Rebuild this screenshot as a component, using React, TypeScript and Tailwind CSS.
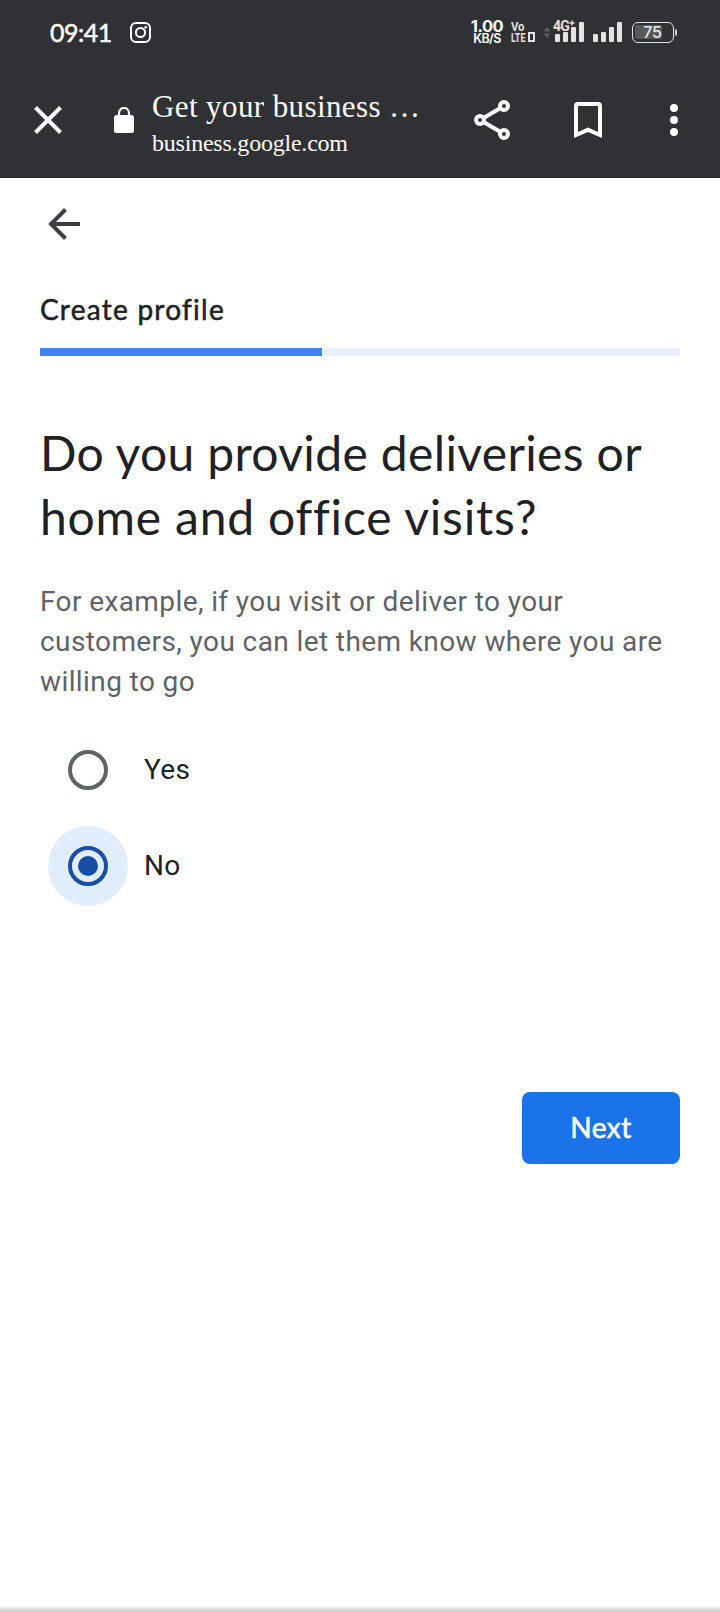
import React from 'react';

function SignalBars({ heights }: { heights: number[] }) {
  return (
    <svg width="29" height="20" viewBox="0 0 29 20" fill="#e2e2e2">
      {heights.map((h, i) => (
        <rect key={i} x={i * 8} y={20 - h} width="5" height={h} rx="1" />
      ))}
    </svg>
  );
}

function StatusBar() {
  return (
    <div className="flex h-16 items-center pl-[50px] font-[Inter,sans-serif] text-white">
      <span className="w-[62px] whitespace-nowrap font-[Lato,sans-serif] text-[25px] leading-8 tracking-[-0.5px] [-webkit-text-stroke:0.5px_white]">09:41</span>
      <svg className="ml-[18px]" width="21" height="21" viewBox="0 0 21 21" fill="none" stroke="#fff" strokeWidth="2">
        <rect x="1" y="1" width="19" height="19" rx="5" />
        <circle cx="10.5" cy="10.5" r="4.6" />
        <circle cx="15.7" cy="5.3" r="1.3" fill="#fff" stroke="none" />
      </svg>
      <div className="ml-[320px] flex w-8 flex-col items-center pt-px">
        <span className="text-[16.5px] font-bold leading-[13px] tracking-[-0.5px]">1.00</span>
        <span className="text-[12.5px] font-semibold leading-[12px] tracking-[-0.6px]">KB/S</span>
      </div>
      <div className="ml-[8px] flex w-6 flex-col font-[Roboto,sans-serif] text-[#e2e2e2]">
        <span className="origin-left scale-x-90 text-[12.5px] font-bold leading-[10px]">Vo</span>
        <span className="flex items-center text-[12.5px] font-bold leading-[11px]">
          <span className="w-[17px] origin-left scale-x-[0.72]">LTE</span>
          <svg width="7" height="10" viewBox="0 0 7 10" fill="none" stroke="#e2e2e2" strokeWidth="2">
            <rect x="1" y="1" width="5" height="8" />
          </svg>
        </span>
      </div>
      <svg className="ml-[8px]" width="8" height="20" viewBox="0 0 8 20" fill="#5d5d60">
        <path d="M4 5l3.500 4.500h-7zM4 16l-3.500-4.500h7z" />
      </svg>
      <div className="relative ml-[4px] h-5 w-[29px]">
        <SignalBars heights={[8, 10, 15, 20]} />
        <span className="absolute -left-[2px] -top-[2px] whitespace-nowrap font-[Roboto,sans-serif] text-[14px] font-bold leading-[12px] tracking-[-0.8px] text-[#e2e2e2]">
          4G
        </span>
        <svg className="absolute left-[14px] -top-[2px]" width="6" height="6" viewBox="0 0 6 6" stroke="#e2e2e2" strokeWidth="1.400">
          <path d="M3 .5v5M.5 3h5" />
        </svg>
      </div>
      <div className="ml-[9px] h-5">
        <SignalBars heights={[8, 10, 15, 20]} />
      </div>
      <div className="ml-[10px] flex items-center">
        <div className="flex h-[21px] w-[42px] items-center rounded-[6px] border-[1.5px] border-[#e2e2e2] p-[2px]">
          <div className="flex h-[14px] w-[27px] items-center justify-end rounded-[2px] bg-[#58585b] text-[16px] font-medium leading-none text-[#e8e8e8]">
            75
          </div>
        </div>
        <div className="ml-px h-[7px] w-[2px] rounded-r bg-[#d0d0d0]" />
      </div>
    </div>
  );
}

function Toolbar() {
  return (
    <div className="flex h-[114px] items-start border-b border-[#29292b]">
      <svg className="ml-[34px] mt-[42px]" width="28" height="28" viewBox="0 0 28 28" stroke="#fff" strokeWidth="4">
        <path d="M1.500 1.500l25 25M26.500 1.500l-25 25" />
      </svg>
      <svg className="ml-[52px] mt-[43px]" width="20" height="26" viewBox="0 0 20 26">
        <path d="M5 10V6a5 5 0 0 1 10 0v4" fill="none" stroke="#fff" strokeWidth="2.200" />
        <rect y="8" width="20" height="18" rx="2.500" fill="#fff" />
      </svg>
      <div className="ml-[18px] mt-[24px] w-[290px] font-[Liberation_Serif,serif] text-white">
        <div className="whitespace-nowrap text-[31px] leading-[38px] tracking-[0.4px]">Get your business …</div>
        <div className="whitespace-nowrap text-[24px] leading-[34px] tracking-[-0.22px]">business.google.com</div>
      </div>
      <svg className="ml-[32px] mt-[36px]" width="36" height="40" viewBox="0 0 36 40" fill="none" stroke="#fff" strokeWidth="4">
        <path d="M30 6L6 20l24 14" />
        <circle cx="30" cy="6" r="4" fill="#303134" />
        <circle cx="6" cy="20" r="4" fill="#303134" />
        <circle cx="30" cy="34" r="4" fill="#303134" />
      </svg>
      <svg className="ml-[64px] mt-[38px]" width="28" height="36" viewBox="0 0 28 36" fill="#fff" fillRule="evenodd">
        <path d="M4 0h20a4 4 0 0 1 4 4v32l-14-6-14 6V4a4 4 0 0 1 4-4zM4 4v26l10-4.400L24 30V4z" />
      </svg>
      <svg className="ml-[68px] mt-[40px]" width="8" height="32" viewBox="0 0 8 32" fill="#fff">
        <circle cx="4" cy="4" r="4" />
        <circle cx="4" cy="16" r="4" />
        <circle cx="4" cy="28" r="4" />
      </svg>
    </div>
  );
}

function RadioOption({ label, checked = false }: { label: string; checked?: boolean }) {
  return (
    <label className="flex h-24 items-center pl-2">
      <span className={checked ? 'flex size-20 items-center justify-center rounded-full bg-[#e1edfc]' : 'flex size-20 items-center justify-center'}>
        <span className={checked ? 'flex size-10 items-center justify-center rounded-full border-4 border-[#174ea6]' : 'size-10 rounded-full border-4 border-[#5f6368]'}>
          {checked && <span className="size-5 rounded-full bg-[#174ea6]" />}
        </span>
      </span>
      <span className="ml-4 text-[28px] leading-10 tracking-[0.4px] text-[#202124]">{label}</span>
    </label>
  );
}

export default function App() {
  return (
    <div className="flex h-[1612px] w-[720px] flex-col overflow-hidden bg-white font-[Roboto,sans-serif]">
      <header className="bg-[#303134]">
        <StatusBar />
        <Toolbar />
      </header>
      <main className="flex flex-1 flex-col px-10">
        <svg className="ml-2 mt-[30px]" width="32" height="32" viewBox="0 0 32 32" fill="none" stroke="#3c4043" strokeWidth="4">
          <path d="M32 16H3M17.500 1.500L3 16l14.500 14.500" />
        </svg>
        <h2 className="mt-[49px] whitespace-nowrap font-[Lato,sans-serif] text-[28px] leading-10 tracking-[1.25px] text-[#202124] [-webkit-text-stroke:0.5px_#202124]">
          Create profile
        </h2>
        <div className="mt-[19px] h-2 bg-[#e8f0fe]">
          <div className="h-2 w-[281.600px] bg-[#4285f4]" />
        </div>
        <h1 className="mt-[65px] whitespace-nowrap font-[Lato,sans-serif] text-[48px] leading-[64px] text-[#202124]">
          <span className="block tracking-[0.35px]">Do you provide deliveries or</span>
          <span className="block tracking-[0.78px]">home and office visits?</span>
        </h1>
        <p className="mt-[33px] whitespace-nowrap text-[28px] leading-10 tracking-[0.4px] text-[#5f6368]">
          For example, if you visit or deliver to your
          <br />
          customers, you can let them know where you are
          <br />
          willing to go
        </p>
        <div className="mt-5">
          <RadioOption label="Yes" />
          <RadioOption label="No" checked />
        </div>
        <button className="mt-[178px] h-[72px] w-[158px] self-end rounded-lg bg-[#1a73e8] pb-[3px] font-[Lato,sans-serif] text-[28px] tracking-[0.5px] text-white [-webkit-text-stroke:0.6px_white]">
          Next
        </button>
      </main>
      <div className="h-[7px] bg-linear-to-b from-white to-[#cbcbcb]" />
    </div>
  );
}
